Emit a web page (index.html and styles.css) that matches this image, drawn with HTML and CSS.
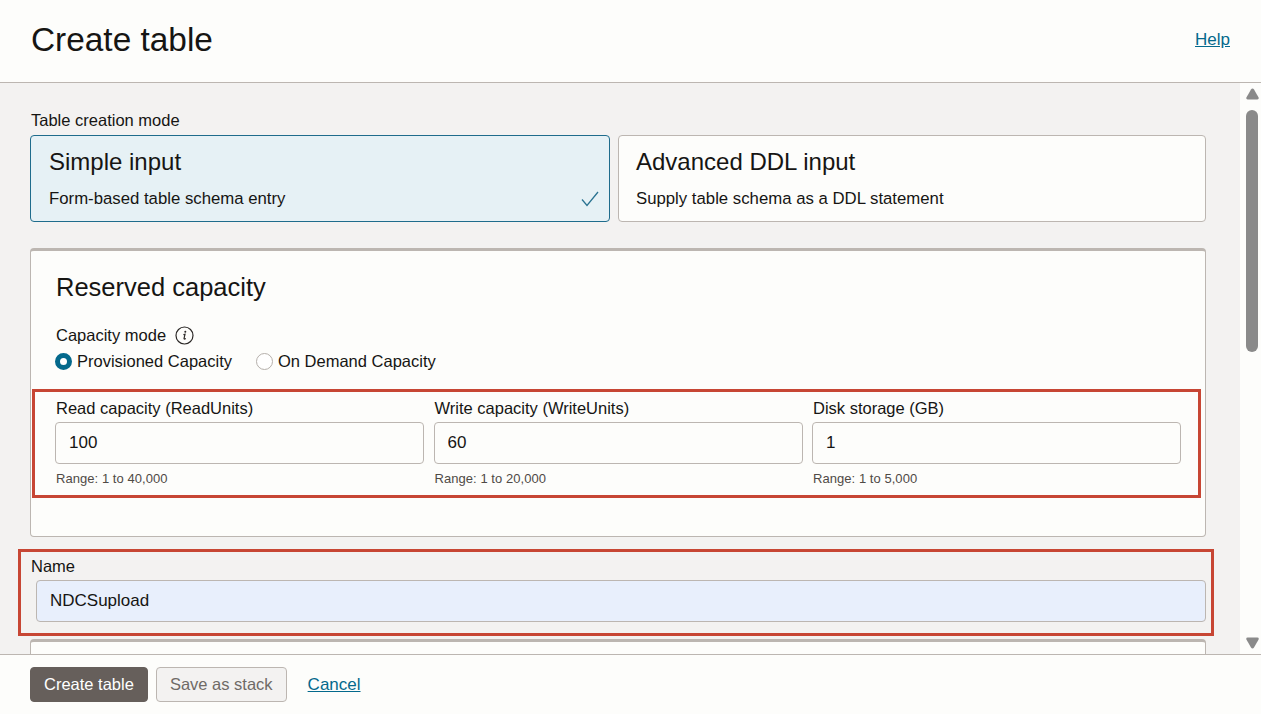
FILE: index.html
```html
<!DOCTYPE html>
<html lang="en">
<head>
    <meta charset="UTF-8">
    <meta name="viewport" content="width=device-width, initial-scale=1.0">
    <title>Create table</title>
    <link rel="stylesheet" href="styles.css">
</head>
<body>

    <header class="top">
        <h1>Create table</h1>
        <a class="link" href="#">Help</a>
    </header>

    <div class="middle">
        <main class="content">
            <div class="label">Table creation mode</div>
            <div class="modes">
                <div class="mode mode-on">
                    <h2>Simple input</h2>
                    <p>Form-based table schema entry</p>
                    <svg class="check" width="18" height="16" viewBox="0 0 18 16"><path d="M1 8.5 L6 14.5 L17 1" fill="none" stroke="#2a7391" stroke-width="1.3"/></svg>
                </div>
                <div class="mode">
                    <h2>Advanced DDL input</h2>
                    <p>Supply table schema as a DDL statement</p>
                </div>
            </div>

            <section class="panel">
                <h3>Reserved capacity</h3>
                <div class="cap-mode">
                    <span>Capacity mode</span>
                    <svg width="19" height="19" viewBox="0 0 19 19"><circle cx="9.5" cy="9.5" r="8.5" fill="none" stroke="#2b2826" stroke-width="1.2"/><circle cx="10.3" cy="5.7" r="1" fill="#2b2826"/><path d="M8.4 8.6 L10 8.3 L9 12.6 Q9 13.6 10.8 12.6" fill="none" stroke="#2b2826" stroke-width="1.2"/></svg>
                </div>
                <div class="radios">
                    <span class="radio radio-on"></span><span class="radio-text">Provisioned Capacity</span>
                    <span class="radio"></span><span class="radio-text">On Demand Capacity</span>
                </div>
                <div class="mark mark-fields">
                    <div class="field">
                        <label for="read">Read capacity (ReadUnits)</label>
                        <input id="read" class="input" type="text" value="100">
                        <small>Range: 1 to 40,000</small>
                    </div>
                    <div class="field">
                        <label for="write">Write capacity (WriteUnits)</label>
                        <input id="write" class="input" type="text" value="60">
                        <small>Range: 1 to 20,000</small>
                    </div>
                    <div class="field">
                        <label for="disk">Disk storage (GB)</label>
                        <input id="disk" class="input" type="text" value="1">
                        <small>Range: 1 to 5,000</small>
                    </div>
                </div>
            </section>

            <div class="mark mark-name">
                <label for="name">Name</label>
                <input id="name" class="input input-filled" type="text" value="NDCSupload">
            </div>

            <section class="panel panel-next"></section>
        </main>

        <div class="scrollbar">
            <svg width="13" height="12" viewBox="0 0 13 12"><path d="M6.5 .5 Q7.4 .5 8 1.4 L12.6 9.5 Q13.2 11.5 11.4 11.5 L1.6 11.5 Q-.2 11.5 .4 9.5 L5 1.4 Q5.6 .5 6.5 .5Z" fill="#8a8a8a"/></svg>
            <div class="thumb"></div>
            <svg class="arrow-down" width="13" height="12" viewBox="0 0 13 12"><path d="M6.5 11.5 Q7.4 11.5 8 10.6 L12.6 2.5 Q13.2 .5 11.4 .5 L1.6 .5 Q-.2 .5 .4 2.5 L5 10.6 Q5.6 11.5 6.5 11.5Z" fill="#8a8a8a"/></svg>
        </div>
    </div>

    <footer class="bottom">
        <button class="btn btn-main" type="button">Create table</button>
        <button class="btn" type="button">Save as stack</button>
        <a class="link cancel" href="#">Cancel</a>
    </footer>

</body>
</html>
```

FILE: styles.css
```css
html, body {
    height: 100%;
}
body {
    margin: 0;
    display: flex;
    flex-direction: column;
    overflow: hidden;
    font-family: "Liberation Sans", Arial, sans-serif;
    font-size: 16.5px;
    color: #161513;
    background-color: #fdfdfb;
}
.top {
    flex: none;
    box-sizing: content-box;
    height: 80px;
    display: flex;
    align-items: center;
    justify-content: space-between;
    padding: 0 31px 2px;
    border-bottom: 1px solid #bcb6b1;
}
h1 {
    margin: 0;
    font-size: 33.4px;
    font-weight: normal;
}
.link {
    font-size: 17px;
    color: #04698c;
    text-decoration: underline;
}
.middle {
    flex: 1;
    min-height: 0;
    display: flex;
}
.content {
    flex: 1;
    min-width: 0;
    overflow: hidden;
    padding: 27px 34px 0 30px;
    background-color: #f3f2f1;
}
.label {
    line-height: 20px;
    padding-left: 1px;
}
.modes {
    display: flex;
    gap: 8px;
    margin-top: 5px;
}
.mode {
    position: relative;
    box-sizing: border-box;
    height: 87px;
    flex: 1;
    padding: 12px 17px 0;
    background-color: #fdfdfb;
    border: 1px solid #bcb6b1;
    border-radius: 4px;
}
.mode-on {
    flex: none;
    width: 580px;
    padding-left: 18px;
    background-color: #e6f1f5;
    border-color: #1f6c8c;
}
.mode h2 {
    margin: 0;
    font-size: 24px;
    line-height: 28px;
    font-weight: normal;
}
.mode p {
    margin: 13px 0 0;
    font-size: 16.75px;
    line-height: 20px;
}
.check {
    position: absolute;
    right: 10px;
    bottom: 14px;
}
.panel {
    box-sizing: border-box;
    height: 289px;
    margin-top: 26px;
    background-color: #fdfdfb;
    border: 1px solid #bcb6b1;
    border-top-width: 3px;
    border-radius: 4px;
}
.panel h3 {
    margin: 21px 0 0 25px;
    font-size: 25.5px;
    line-height: 30px;
    font-weight: normal;
}
.cap-mode {
    display: flex;
    align-items: center;
    gap: 9px;
    margin: 22px 0 0 25px;
    height: 22px;
}
.radios {
    display: flex;
    align-items: center;
    margin: 3px 0 0 24px;
    height: 24px;
}
.radio {
    box-sizing: border-box;
    width: 17px;
    height: 17px;
    border: 1px solid #b5b0ab;
    border-radius: 50%;
    background-color: #fff;
}
.radio-on {
    border: 5.5px solid #04698c;
}
.radio-text {
    margin: 0 24px 0 5px;
}
.mark {
    border: 3px solid #c74634;
}
.mark-fields {
    display: grid;
    grid-template-columns: repeat(3, 1fr);
    gap: 9.5px;
    margin: 16px 4px 0 1px;
    padding: 6px 17px 6px 20px;
}
.field label {
    display: block;
    line-height: 20px;
    padding-left: 1px;
}
.input {
    display: block;
    box-sizing: border-box;
    width: 100%;
    height: 42px;
    margin-top: 4px;
    padding: 0 13px;
    font-family: inherit;
    font-size: 17px;
    color: #161513;
    background-color: #fdfdfb;
    border: 1px solid #bcb6b1;
    border-radius: 4px;
}
.field small {
    display: block;
    margin-top: 5px;
    padding-left: 1px;
    font-size: 13px;
    letter-spacing: .05px;
    line-height: 20px;
    color: #4f4a46;
}
.mark-name {
    margin: 12px -8px 0 -12px;
    padding: 4px 5px 11px 10px;
    line-height: 20px;
}
.mark-name .input {
    width: calc(100% - 5px);
    margin-left: 5px;
}
.input-filled {
    background-color: #e8effc;
}
.panel-next {
    margin-top: 3px;
}
.scrollbar {
    flex: none;
    width: 21px;
    box-sizing: border-box;
    display: flex;
    flex-direction: column;
    align-items: center;
    padding: 5px 0 5px 3px;
}
.thumb {
    width: 12px;
    height: 242px;
    margin-top: 10px;
    border-radius: 6px;
    background-color: #8a8a8a;
}
.arrow-down {
    margin-top: auto;
}
.bottom {
    flex: none;
    height: 60px;
    box-sizing: border-box;
    display: flex;
    align-items: center;
    gap: 8px;
    padding: 0 30px;
    border-top: 1px solid #bcb6b1;
}
.btn {
    height: 35px;
    padding: 0 13px;
    font-family: inherit;
    font-size: 16.5px;
    color: #6f6a66;
    background-color: #f3f2f1;
    border: 1px solid #bcb6b1;
    border-radius: 4px;
}
.btn-main {
    color: #fff;
    background-color: #665f5b;
    border-color: #665f5b;
}
.cancel {
    margin-left: 13px;
}
```
